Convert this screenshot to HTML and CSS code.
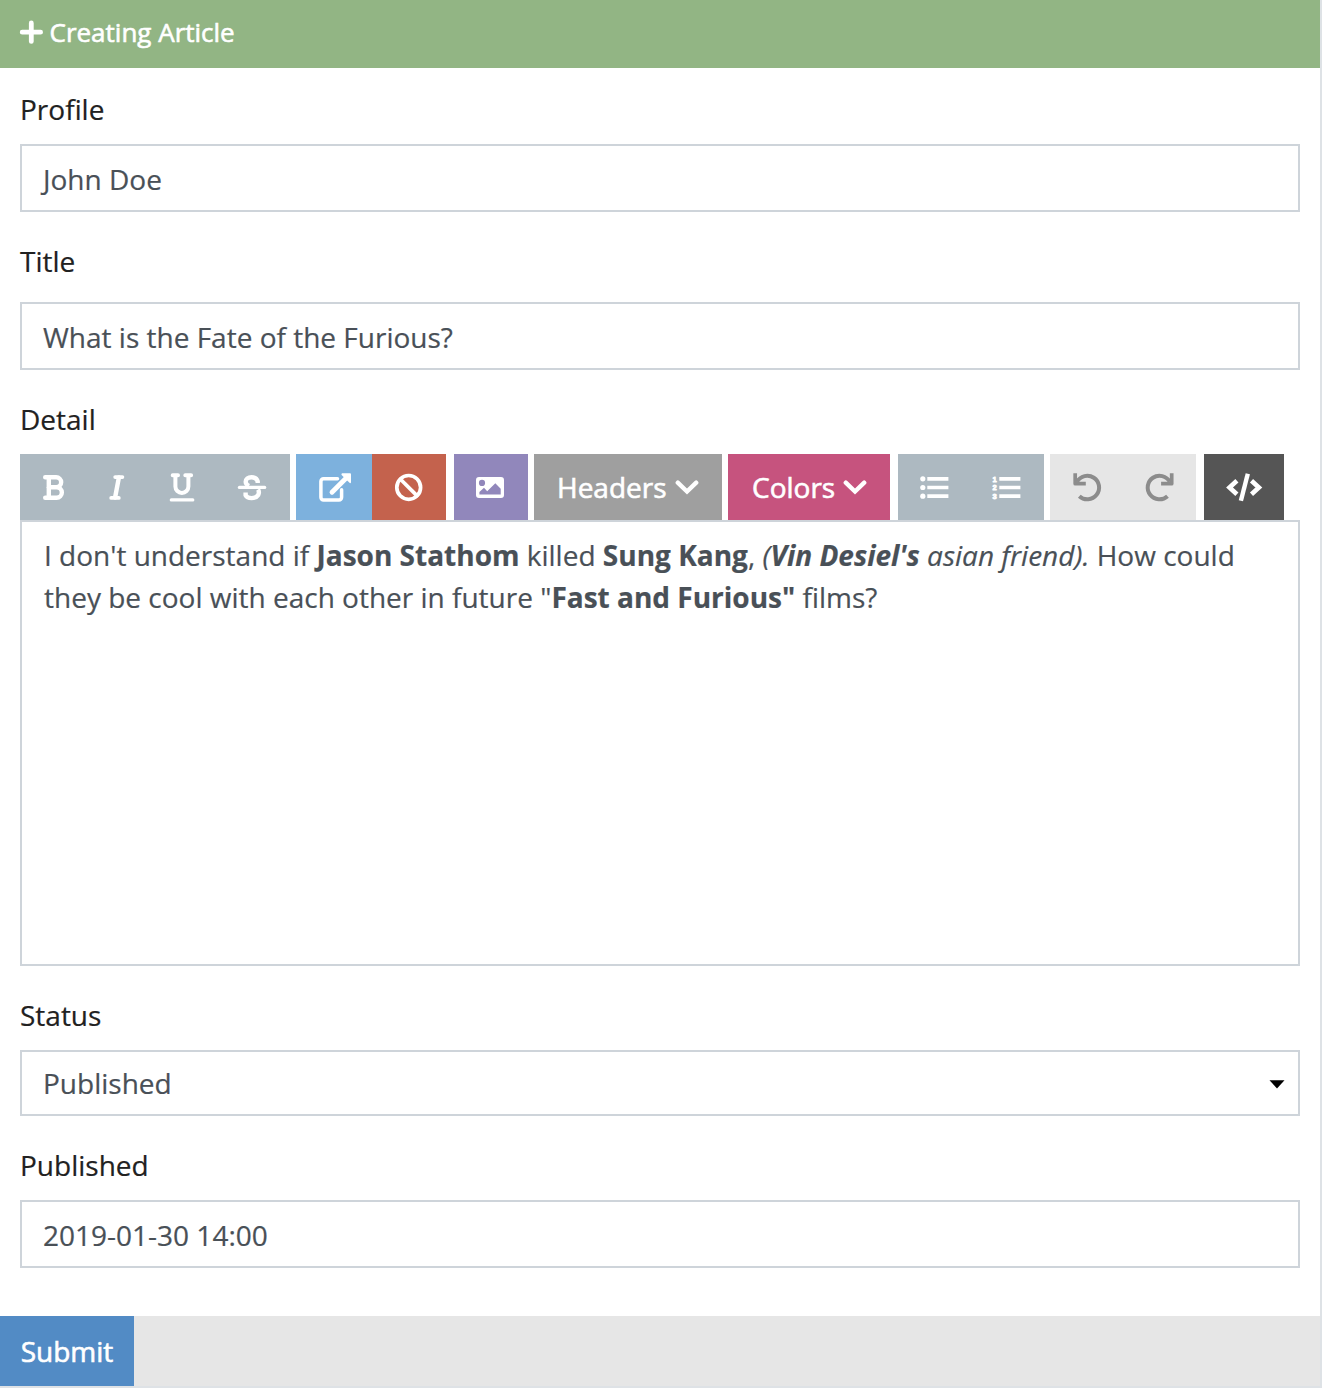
FILE: index.html
```html
<!DOCTYPE html>
<html lang="en">
<head>
<meta charset="utf-8">
<title>Creating Article</title>
<link rel="stylesheet" href="styles.css">
</head>
<body>
<main class="card">
  <header class="card-header">
    <svg class="plus" viewBox="0 0 24 24"><path d="M12.3 3v18.4M3.2 12.2h18.4"/></svg>
    <h1>Creating Article</h1>
  </header>
  <form class="card-body">
    <label class="label label-profile">Profile</label>
    <div class="control"><span>John Doe</span></div>
    <label class="label label-title">Title</label>
    <div class="control"><span>What is the Fate of the Furious?</span></div>
    <label class="label label-detail">Detail</label>
    <div class="toolbar">
      <div class="group slate">
        <svg class="icon w66" viewBox="20 454 66 66"><path d="M45.2 477.3H56.2a4.9 4.9 0 0 1 0 9.9H48.5M48.8 477.3V497.7M45.2 497.7H56.6a5.2 5.2 0 0 0 0-10.5" stroke-width="4.4"/></svg>
        <svg class="icon w62" viewBox="86 454 62 66"><path d="M115.2 477.1H122.4M111.2 497.9H118.8" stroke-width="3.8"/><path d="M118.9 477.5L115.1 497.5" stroke-width="4.4"/></svg>
        <svg class="icon w67" viewBox="148 454 67 66"><path d="M172.7 475.2H178M185.3 475.2H191.1M175.4 475.5V486.4a6.5 6.5 0 0 0 13 0V475.5" stroke-width="4"/><path d="M171.3 499.9H192.8" stroke-width="3.2"/></svg>
        <svg class="icon w75" viewBox="215 454 75 66"><path class="butt" d="M257.7 483V481.5C256.8 478.5 254.5 477.3 251.5 477.3C248 477.3 245.7 479 245.7 481.8C245.7 483.7 246.9 485 249 486M258 489.5C259 491 259.2 493 258.2 495C255.5 499.2 247.5 499 245.6 495.3V492.4" stroke-width="4.4"/><path d="M239.5 487.4H264.6" stroke-width="3.4"/></svg>
      </div>
      <div class="group link">
        <svg class="icon w76 blue" viewBox="296 454 76 66"><path d="M337.5 478.8H323.5a2.6 2.6 0 0 0-2.6 2.6V497.3a2.6 2.6 0 0 0 2.6 2.6H339a2.6 2.6 0 0 0 2.6-2.6V489.8" stroke-width="3.5"/><path d="M332 492.2L346.5 477.7" stroke-width="4.8"/><path class="solid" d="M342.2 473.3H350a1 1 0 0 1 1 1V482.2q-.3 1.5-1.5.6L341.6 475q-.8-1 .6-1.7z"/></svg>
        <svg class="icon w74 red" viewBox="372 454 74 66"><circle cx="408.7" cy="487.4" r="11.9" stroke-width="3.7"/><path d="M400.5 479.2L416.9 495.6" stroke-width="3.7"/></svg>
      </div>
      <div class="group image purple">
        <svg class="icon w74" viewBox="454 454 74 66"><path class="solid" fill-rule="evenodd" d="M479 477H501a3 3 0 0 1 3 3V495a3 3 0 0 1-3 3H479a3 3 0 0 1-3-3V480a3 3 0 0 1 3-3zM482 479.8a3.1 3.1 0 1 0 0 6.2 3.1 3.1 0 0 0 0-6.2zM479.4 494.6H500.7V488.7L495.3 483.3 487.2 491.2 484 487.8 479.4 492z"/></svg>
      </div>
      <div class="group headers gray"><span>Headers</span><svg class="chevron" viewBox="0 0 24 16"><path d="M2.8 3.7L12 12.5L21.2 3.7"/></svg></div>
      <div class="group colors pink"><span>Colors</span><svg class="chevron" viewBox="0 0 24 16"><path d="M2.8 3.7L12 12.5L21.2 3.7"/></svg></div>
      <div class="group lists slate">
        <svg class="icon w73" viewBox="898 454 73 66"><g class="solid"><circle cx="922.8" cy="478.8" r="2.6"/><circle cx="922.8" cy="487.5" r="2.6"/><circle cx="922.8" cy="496.2" r="2.6"/></g><path class="butt" d="M927.3 478.8H948.4M927.3 487.5H948.4M927.3 496.2H948.4" stroke-width="3.7"/></svg>
        <svg class="icon w73" viewBox="971 454 73 66"><g class="digits"><text x="992.6" y="481.7">1</text><text x="992.6" y="490.4">2</text><text x="992.6" y="499.1">3</text></g><path class="butt" d="M999.3 478.8H1020.4M999.3 487.5H1020.4M999.3 496.2H1020.4" stroke-width="3.7"/></svg>
      </div>
      <div class="group history">
        <svg class="icon w73" viewBox="1050 454 73 66"><path class="butt" d="M1079.3 496.2A11.8 11.8 0 1 0 1077 481.8" stroke-width="4"/><path class="butt" d="M1075.2 473.3V483.7H1085.8" stroke-width="3.7"/></svg>
        <svg class="icon w73" viewBox="1123 454 73 66"><path class="butt" d="M1167.5 496.2A11.8 11.8 0 1 1 1169.8 481.8" stroke-width="4"/><path class="butt" d="M1171.7 473.3V483.7H1161.1" stroke-width="3.7"/></svg>
      </div>
      <div class="group code">
        <svg class="icon w80" viewBox="1204 454 80 66"><path class="butt" d="M1247.8 473.8L1240.9 500.8" stroke-width="4.4"/><path class="butt sharp" d="M1236.9 480.7L1229.5 487.5L1236.9 494.3M1251.5 480.7L1258.9 487.5L1251.5 494.3" stroke-width="4.6"/></svg>
      </div>
    </div>
    <div class="editor">
      <div>I don't understand if <b>Jason Stathom</b> killed <b>Sung Kang</b>, <i>(<b>Vin Desiel's</b> asian friend).</i> How could</div>
      <div>they be cool with each other in future "<b>Fast and Furious"</b> films?</div>
    </div>
    <label class="label label-status">Status</label>
    <div class="control select"><span>Published</span><svg class="caret" viewBox="0 0 16 10"><path d="M.5 1.2H15.5L8 9.5z"/></svg></div>
    <label class="label label-date">Published</label>
    <div class="control"><span>2019-01-30 14:00</span></div>
  </form>
  <footer class="card-footer"><button class="submit" type="button">Submit</button></footer>
</main>
</body>
</html>
```
FILE: styles.css
```css
* { box-sizing: border-box; }
body { margin: 0; background: #fff; color: #212121; font: 28px/42px "Open Sans", sans-serif; -webkit-text-stroke: .2px; }
.card { width: 1322px; height: 1388px; display: flex; flex-direction: column; border: solid #dee2e6; border-width: 0 2px 2px 0; }
.card-header { height: 68px; background: #92b584; color: #fff; display: flex; align-items: center; padding: 0 19px 4px; gap: 6.5px; -webkit-text-stroke: .6px; }
.card-header h1 { margin: 0; font-size: 26px; font-weight: 400; line-height: 40px; }
.plus { width: 24px; height: 24px; fill: none; stroke: #fff; stroke-width: 4.8; stroke-linecap: round; }
.card-body { height: 1248px; padding: 0 20px; display: flex; flex-direction: column; }
.label { display: block; line-height: 42px; flex: none; }
.label-profile { padding-top: 20px; height: 76px; }
.label-title { padding-top: 28px; height: 90px; }
.label-detail { padding-top: 28px; height: 84px; }
.label-status { padding-top: 28px; height: 84px; }
.label-date { padding-top: 28px; height: 84px; }
.control { height: 68px; flex: none; border: 2px solid #ced4da; color: #495057; padding: 2px 21px 0; display: flex; align-items: center; }
.select { height: 66px; padding: 0 13px 0 21px; justify-content: space-between; }
.caret { width: 16px; height: 10px; margin-top: 2px; }
.toolbar { display: flex; height: 66px; flex: none; }
.group { display: flex; margin-right: 6px; color: #fff; align-items: center; -webkit-text-stroke: .6px; }
.link, .colors { margin-right: 8px; }
.history { margin-right: 8px; background: #e6e6e6; }
.slate { background: #adb9c1; }
.blue { background: #7db1dd; }
.red { background: #c4624d; }
.purple { background: #9187bb; }
.gray { background: #9f9f9f; }
.pink { background: #c6537e; }
.code { background: #555; margin: 0; }
.headers { width: 188px; padding: 0 23px; justify-content: space-between; }
.colors { width: 162px; padding: 0 23px 0 24px; justify-content: space-between; }
.chevron { width: 24px; height: 16px; fill: none; stroke: #fff; stroke-width: 4.4; stroke-linecap: round; stroke-linejoin: miter; }
.icon { display: block; height: 66px; fill: none; stroke: #fff; stroke-linecap: round; stroke-linejoin: round; }
.history .icon { stroke: #8c8c8c; }
.icon .solid { fill: #fff; stroke: none; }
.icon .butt { stroke-linecap: butt; }
.icon .sharp { stroke-linejoin: miter; }
.digits { fill: #fff; stroke: #fff; stroke-width: .8px; font: bold 7.5px/1 "Liberation Sans", sans-serif; }
.w62 { width: 62px; }
.w66 { width: 66px; }
.w67 { width: 67px; }
.w73 { width: 73px; }
.w74 { width: 74px; }
.w75 { width: 75px; }
.w76 { width: 76px; }
.w80 { width: 80px; }
.editor { height: 446px; flex: none; border: 2px solid #ced4da; color: #495057; padding: 12px 22px; white-space: nowrap; }
.card-footer { height: 70px; background: #e6e6e6; display: flex; }
.submit { width: 134px; border: 0; padding: 0; background: #528bc5; color: #fff; font: inherit; -webkit-text-stroke: .6px; }
```
